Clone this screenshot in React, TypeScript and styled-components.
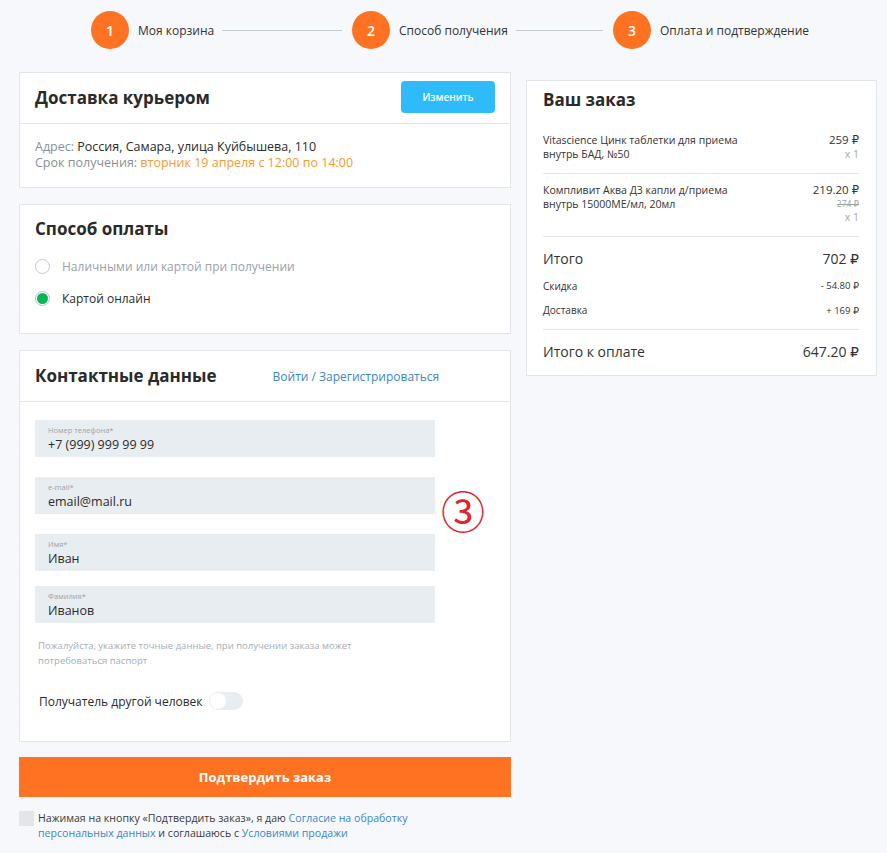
import React from "react";
import styled, { createGlobalStyle } from "styled-components";

const FONT = `"Open Sans", "DejaVu Sans", sans-serif`;

const Global = createGlobalStyle`
  html, body { margin: 0; padding: 0; background: #f6f8fc; }
  body { font-family: ${FONT}; color: #2b2b2b; }
  * { box-sizing: border-box; }
`;

const Page = styled.div`
  width: 887px;
  min-height: 853px;
  background: #f6f8fc;
  padding: 11px 10px 0 19px;
`;

const Stepper = styled.div`
  display: flex;
  align-items: center;
  padding-left: 72px;
  height: 38px;
  margin-bottom: 23px;
`;

const Step = styled.div<{ $last?: boolean }>`
  display: flex;
  align-items: center;
  flex: 0 0 ${(p) => (p.$last ? "auto" : "261px")};
`;

const StepNum = styled.div`
  width: 38px;
  height: 38px;
  border-radius: 50%;
  background: #ff7222;
  color: #fff;
  font-size: 14px;
  font-weight: 600;
  display: flex;
  align-items: center;
  justify-content: center;
  flex: none;
`;

const StepLabel = styled.span`
  font-size: 12px;
  color: #333;
  margin-left: 9px;
  white-space: nowrap;
`;

const StepLine = styled.div`
  flex: 1;
  height: 1px;
  background: #c3cbd3;
  margin: 0 10px 0 8px;
`;

const Columns = styled.div`
  display: flex;
  gap: 15px;
  align-items: flex-start;
`;

const LeftCol = styled.div`
  width: 492px;
  display: flex;
  flex-direction: column;
`;

const RightCol = styled.div`
  width: 351px;
  margin-top: 8px;
`;

const Card = styled.section`
  position: relative;
  background: #fff;
  border: 1px solid #e1e5ec;
  margin-bottom: 16px;
`;

const CardHead = styled.div<{ $border?: boolean }>`
  display: flex;
  align-items: center;
  height: 51px;
  padding: 0 15px ${(p) => (p.$border ? "2px" : "4px")} 15px;
  border-bottom: ${(p) => (p.$border ? "1px solid #e1e5ec" : "none")};
`;

const CardTitle = styled.h2`
  margin: 0;
  font-size: 17px;
  font-weight: 700;
  color: #2a2a2a;
  font-family: ${FONT};
`;

const ChangeButton = styled.button`
  margin-left: auto;
  width: 94px;
  height: 32px;
  border: none;
  border-radius: 4px;
  background: #2fbaf9;
  color: #fff;
  font-family: ${FONT};
  font-size: 10px;
  font-weight: 600;
`;

const DeliveryBody = styled.div`
  padding: 15px 15px 16px;
  font-size: 12.5px;
  line-height: 16px;
`;

const Muted = styled.span`
  color: #8b9096;
`;

const Orange = styled.span`
  color: #f49b2d;
`;

const PayBody = styled.div`
  padding: 2px 15px 26px;
  display: flex;
  flex-direction: column;
  gap: 15px;
`;

const RadioRow = styled.label<{ $active?: boolean }>`
  display: flex;
  align-items: center;
  gap: 12px;
  height: 17px;
  font-size: 12px;
  color: ${(p) => (p.$active ? "#2b2b2b" : "#9aa1a8")};
`;

const RadioDot = styled.span<{ $checked?: boolean }>`
  width: 15px;
  height: 15px;
  border-radius: 50%;
  border: 1px solid ${(p) => (p.$checked ? "#b9c0c6" : "#c9c5c8")};
  background: #fff;
  display: flex;
  align-items: center;
  justify-content: center;
  &::after {
    content: "";
    display: ${(p) => (p.$checked ? "block" : "none")};
    width: 11px;
    height: 11px;
    border-radius: 50%;
    background: #0ab55a;
  }
`;

const HeadLink = styled.a`
  margin-left: 56px;
  margin-top: 3px;
  font-size: 12px;
  color: #3b87c7;
  text-decoration: none;
`;

const ContactBody = styled.div`
  padding: 18px 15px 31px;
`;

const Field = styled.div<{ $gap?: number }>`
  width: 400px;
  height: 37px;
  background: #e8edf1;
  padding: 5px 13px 0;
  margin-bottom: ${(p) => p.$gap ?? 20}px;
`;

const FieldLabel = styled.div`
  font-size: 7.5px;
  color: #9ba3aa;
  line-height: 10px;
`;

const FieldValue = styled.div`
  font-size: 12.5px;
  color: #2b2b2b;
  line-height: 18px;
  margin-top: 1px;
`;

const Hint = styled.p`
  margin: 0 0 0 3px;
  width: 370px;
  font-size: 9.5px;
  line-height: 15px;
  color: #a7aeb5;
`;

const ToggleRow = styled.div`
  display: flex;
  align-items: center;
  gap: 6px;
  margin: 24px 0 0 4px;
  font-size: 12px;
`;

const Toggle = styled.span`
  width: 34px;
  height: 18px;
  border-radius: 9px;
  background: #e8edf1;
  padding: 1px;
  display: flex;
  &::before {
    content: "";
    width: 16px;
    height: 16px;
    border-radius: 50%;
    background: #fff;
  }
`;

const Annotation = styled.span`
  position: absolute;
  left: 421px;
  top: 137px;
  font-size: 44px;
  line-height: 44px;
  color: #e3222a;
  font-family: "Noto Sans CJK JP", sans-serif;
`;

const ConfirmButton = styled.button`
  width: 492px;
  height: 40px;
  border: none;
  background: #ff7222;
  color: #fff;
  font-family: ${FONT};
  font-size: 13px;
  font-weight: 700;
  margin-top: -1px;
`;

const Consent = styled.div`
  display: flex;
  gap: 4px;
  margin-top: 14px;
  font-size: 10.6px;
  line-height: 15px;
  color: #3a3a3a;
`;

const ConsentText = styled.div`
  max-width: 400px;
`;

const CheckBox = styled.span`
  width: 15px;
  height: 15px;
  background: #e2e6ea;
  flex: none;
`;

const Link = styled.a`
  color: #3b87c7;
  text-decoration: none;
`;

const OrderCard = styled.section`
  background: #fff;
  border: 1px solid #e1e5ec;
  padding: 0 17px 13px 16px;
`;

const OrderHead = styled.div`
  height: 36px;
  display: flex;
  align-items: center;
  margin-bottom: 16px;
`;

const Item = styled.div<{ $first?: boolean }>`
  display: flex;
  justify-content: space-between;
  padding: ${(p) => (p.$first ? "0" : "9px")} 0 12px;
  border-bottom: 1px solid #e1e5ec;
`;

const ItemName = styled.div`
  width: 220px;
  font-size: 10.5px;
  line-height: 14px;
  color: #333;
`;

const ItemPrice = styled.div`
  text-align: right;
  font-size: 11.5px;
  line-height: 14px;
  color: #333;
`;

const Old = styled.div`
  font-size: 8.5px;
  color: #9aa1a8;
  text-decoration: line-through;
  line-height: 13px;
`;

const Qty = styled.div`
  font-size: 10.5px;
  color: #a2a8ae;
  line-height: 14px;
`;

const TotalRow = styled.div<{ $big?: boolean }>`
  display: flex;
  justify-content: space-between;
  align-items: center;
  font-size: ${(p) => (p.$big ? "14px" : "10px")};
  color: #333;
  height: ${(p) => (p.$big ? "22px" : "16px")};
  margin-top: ${(p) => (p.$big ? "0" : "8.5px")};
`;

const SmallAmount = styled.span`
  font-size: 9.5px;
`;

const Totals = styled.div`
  padding: 10px 0 11px;
  border-bottom: 1px solid #e1e5ec;
`;

const Final = styled.div`
  padding-top: 10px;
`;

export default function App() {
  return (
    <Page>
      <Global />
      <Stepper>
        <Step>
          <StepNum>1</StepNum>
          <StepLabel>Моя корзина</StepLabel>
          <StepLine />
        </Step>
        <Step>
          <StepNum>2</StepNum>
          <StepLabel>Способ получения</StepLabel>
          <StepLine />
        </Step>
        <Step $last>
          <StepNum>3</StepNum>
          <StepLabel>Оплата и подтверждение</StepLabel>
        </Step>
      </Stepper>
      <Columns>
        <LeftCol>
          <Card>
            <CardHead $border>
              <CardTitle>Доставка курьером</CardTitle>
              <ChangeButton>Изменить</ChangeButton>
            </CardHead>
            <DeliveryBody>
              <div>
                <Muted>Адрес: </Muted>Россия, Самара, улица Куйбышева, 110
              </div>
              <div>
                <Muted>Срок получения: </Muted>
                <Orange>вторник 19 апреля с 12:00 по 14:00</Orange>
              </div>
            </DeliveryBody>
          </Card>
          <Card>
            <CardHead>
              <CardTitle>Способ оплаты</CardTitle>
            </CardHead>
            <PayBody>
              <RadioRow>
                <RadioDot />
                Наличными или картой при получении
              </RadioRow>
              <RadioRow $active>
                <RadioDot $checked />
                Картой онлайн
              </RadioRow>
            </PayBody>
          </Card>
          <Card>
            <CardHead $border>
              <CardTitle>Контактные данные</CardTitle>
              <HeadLink>Войти / Зарегистрироваться</HeadLink>
            </CardHead>
            <ContactBody>
              <Field>
                <FieldLabel>Номер телефона*</FieldLabel>
                <FieldValue>+7 (999) 999 99 99</FieldValue>
              </Field>
              <Field>
                <FieldLabel>e-mail*</FieldLabel>
                <FieldValue>email@mail.ru</FieldValue>
              </Field>
              <Field $gap={15}>
                <FieldLabel>Имя*</FieldLabel>
                <FieldValue>Иван</FieldValue>
              </Field>
              <Field $gap={15}>
                <FieldLabel>Фамилия*</FieldLabel>
                <FieldValue>Иванов</FieldValue>
              </Field>
              <Hint>
                Пожалуйста, укажите точные данные, при получении заказа может
                потребоваться паспорт
              </Hint>
              <ToggleRow>
                Получатель другой человек
                <Toggle />
              </ToggleRow>
            </ContactBody>
            <Annotation>③</Annotation>
          </Card>
          <ConfirmButton>Подтвердить заказ</ConfirmButton>
          <Consent>
            <CheckBox />
            <ConsentText>
              Нажимая на кнопку «Подтвердить заказ», я даю{" "}
              <Link>Согласие на обработку</Link>{" "}
              <Link>персональных данных</Link> и соглашаюсь с{" "}
              <Link>Условиями продажи</Link>
            </ConsentText>
          </Consent>
        </LeftCol>
        <RightCol>
          <OrderCard>
            <OrderHead>
              <CardTitle>Ваш заказ</CardTitle>
            </OrderHead>
            <Item $first>
              <ItemName>Vitascience Цинк таблетки для приема внутрь БАД, №50</ItemName>
              <ItemPrice>
                259 ₽<Qty>x 1</Qty>
              </ItemPrice>
            </Item>
            <Item>
              <ItemName>Компливит Аква Д3 капли д/приема внутрь 15000МЕ/мл, 20мл</ItemName>
              <ItemPrice>
                219.20 ₽<Old>274 ₽</Old>
                <Qty>x 1</Qty>
              </ItemPrice>
            </Item>
            <Totals>
              <TotalRow $big>
                <span>Итого</span>
                <span>702 ₽</span>
              </TotalRow>
              <TotalRow>
                <span>Скидка</span>
                <SmallAmount>- 54.80 ₽</SmallAmount>
              </TotalRow>
              <TotalRow>
                <span>Доставка</span>
                <SmallAmount>+ 169 ₽</SmallAmount>
              </TotalRow>
            </Totals>
            <Final>
              <TotalRow $big>
                <span>Итого к оплате</span>
                <span>647.20 ₽</span>
              </TotalRow>
            </Final>
          </OrderCard>
        </RightCol>
      </Columns>
    </Page>
  );
}
